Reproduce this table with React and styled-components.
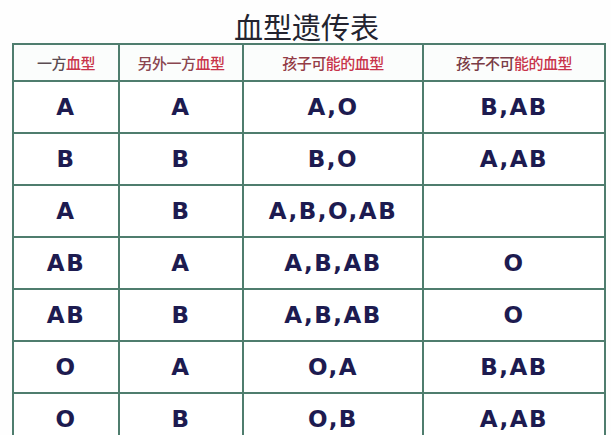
import styled, { createGlobalStyle } from "styled-components";

const GlobalStyle = createGlobalStyle`
  html, body {
    margin: 0;
    padding: 0;
    background: #ffffff;
  }
`;

const Page = styled.div`
  width: 611px;
  height: 435px;
  overflow: hidden;
  background: #fefefe;
`;

const Title = styled.h1`
  margin: 0;
  padding-top: 9px;
  height: 34px;
  line-height: 34px;
  text-align: center;
  font-family: "Noto Sans CJK SC", "Noto Sans", sans-serif;
  font-weight: 400;
  font-size: 29px;
  color: #23232f;
  padding-left: 2px;
`;

const Table = styled.table`
  margin-left: 12px;
  width: 592px;
  border-collapse: collapse;
  table-layout: fixed;
  border: 2px solid #4f7d6e;
`;

const HeadCell = styled.th`
  height: 35px;
  padding: 0;
  border: 2px solid #4f7d6e;
  background: #fbfdfc;
  font-family: "Noto Sans CJK SC", "Noto Sans", sans-serif;
  font-size: 15px;
  font-weight: 500;
  text-align: center;
  color: ${(p) => p.$tone || "#8a3a44"};
  letter-spacing: -0.5px;
`;

const Red = styled.span`
  color: #c8344a;
`;

const Cell = styled.td`
  height: 50px;
  padding: 0;
  border: 2px solid #4f7d6e;
  background: #ffffff;
  text-align: center;
  font-family: "DejaVu Sans", "Liberation Sans", sans-serif;
  font-weight: 700;
  font-size: 23px;
  letter-spacing: 1.5px;
  color: #1d1b50;
`;

const rows = [
  ["A", "A", "A,O", "B,AB"],
  ["B", "B", "B,O", "A,AB"],
  ["A", "B", "A,B,O,AB", ""],
  ["AB", "A", "A,B,AB", "O"],
  ["AB", "B", "A,B,AB", "O"],
  ["O", "A", "O,A", "B,AB"],
  ["O", "B", "O,B", "A,AB"],
];

export default function App() {
  return (
    <Page>
      <GlobalStyle />
      <Title>血型遗传表</Title>
      <Table>
        <colgroup>
          <col style={{ width: 106 }} />
          <col style={{ width: 124 }} />
          <col style={{ width: 180 }} />
          <col style={{ width: 182 }} />
        </colgroup>
        <thead>
          <tr>
            <HeadCell $tone="#5a4c52">
              一方<Red>血型</Red>
            </HeadCell>
            <HeadCell $tone="#8a4650">
              另外一方<Red>血型</Red>
            </HeadCell>
            <HeadCell $tone="#943c46">
              孩子可<Red>能的血型</Red>
            </HeadCell>
            <HeadCell $tone="#7a3c46">
              孩子不可<Red>能的血型</Red>
            </HeadCell>
          </tr>
        </thead>
        <tbody>
          {rows.map((r, i) => (
            <tr key={i}>
              {r.map((v, j) => (
                <Cell key={j}>{v}</Cell>
              ))}
            </tr>
          ))}
        </tbody>
      </Table>
    </Page>
  );
}
